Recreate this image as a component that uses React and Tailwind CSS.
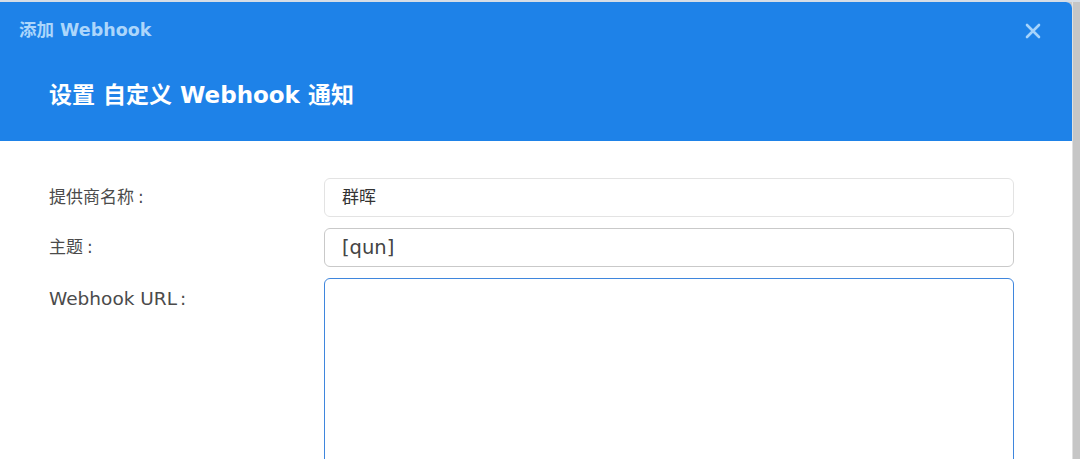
import React from "react";

export default function App() {
  const font = { fontFamily: '"DejaVu Sans", "Noto Sans CJK SC", sans-serif' };
  return (
    <div className="w-[1080px] h-[459px] overflow-hidden bg-[#c9c9c9] flex flex-col" style={font}>
      <div className="h-[2px] bg-[#d6dde6] shrink-0" />
      <div className="flex flex-1 min-h-0">
        <div className="w-[1072px] flex flex-col bg-white rounded-tr-[6px] overflow-hidden">
          <div className="h-[139px] bg-[#1e82e8] flex flex-col shrink-0">
            <div className="h-[58px] flex items-center justify-between pl-[19px] pr-[31px]">
              <span className="text-[17.5px] font-bold text-[#acd6fb] leading-none">添加 Webhook</span>
              <svg width="16" height="16" viewBox="0 0 16 16" className="text-[#a6d3fb]">
                <path d="M2 2 L14 14 M14 2 L2 14" stroke="currentColor" strokeWidth="2.6" strokeLinecap="round" />
              </svg>
            </div>
            <div className="pl-[49px] pt-[24px]">
              <span className="text-[23px] font-bold text-white leading-none">设置 自定义 Webhook 通知</span>
            </div>
          </div>
          <div className="flex flex-col pt-[37px] pl-[49px] gap-[11px]">
            <div className="flex items-center h-[39px]">
              <div className="w-[275px] text-[17px] text-[#4b4b4b]">提供商名称<span className="ml-[4px]">:</span></div>
              <div className="w-[690px] h-[39px] border border-[#e3e3e3] rounded-[6px] flex items-center pl-[17px] text-[17px] text-[#333]">群晖</div>
            </div>
            <div className="flex items-center h-[39px]">
              <div className="w-[275px] text-[17px] text-[#4b4b4b]">主题<span className="ml-[4px]">:</span></div>
              <div className="w-[690px] h-[39px] border border-[#c9c9c9] rounded-[6px] flex items-center pl-[17px] text-[19.5px] text-[#444]">[qun]</div>
            </div>
            <div className="flex items-start">
              <div className="w-[275px] text-[18.5px] text-[#4b4b4b] pt-[7px]">Webhook URL<span className="ml-[3px]">:</span></div>
              <div className="w-[690px] h-[200px] border-[1.5px] border-[#3f86dd] rounded-[6px]" />
            </div>
          </div>
        </div>
        <div className="flex-1 bg-[#c6c6c6] border-l border-[#e0e0e0]" />
      </div>
    </div>
  );
}
